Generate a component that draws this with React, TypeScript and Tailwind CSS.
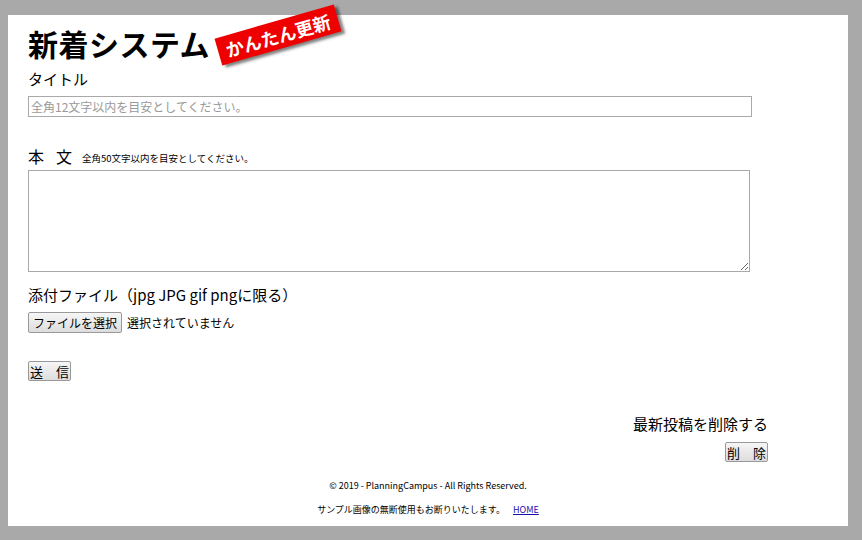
export default function App() {
  return (
    <div className="min-h-[540px] bg-[#a9a9a9] pt-[15px] pl-2 pr-[14px] pb-[14px] font-['Noto_Sans_CJK_JP',sans-serif] text-black">
      <div className="h-[511px] w-[840px] bg-white pl-5 pt-[5px]">
        <div className="relative flex h-[46px] items-center">
          <h1 className="text-[30px] font-bold leading-none tracking-[0.5px]">新着システム</h1>
          <span className="absolute left-[188px] top-[1px] -rotate-[16deg] bg-[#ee0000] px-[8px] py-[2px] text-[18px] font-bold leading-[24px] text-white shadow-[3px_3px_3px_rgba(0,0,0,0.5)]">
            かんたん更新
          </span>
        </div>
        <div className="mt-[3px] text-[15px] leading-[20px]">タイトル</div>
        <input
          type="text"
          placeholder="全角12文字以内を目安としてください。"
          className="mt-[7px] h-[21px] w-[724px] border border-[#a9a9a9] px-[2px] text-[12px] outline-none placeholder:text-[#999]"
        />
        <div className="mt-[31px] flex items-end leading-none">
          <span className="text-[16px]">本</span>
          <span className="ml-[12px] text-[16px]">文</span>
          <span className="ml-[10px] pb-[1px] text-[9.5px] whitespace-nowrap">全角50文字以内を目安としてください。</span>
        </div>
        <textarea className="mt-[6px] block h-[102px] w-[722px] border border-[#a9a9a9] outline-none" />
        <div className="mt-[13px] text-[15px] leading-[20px]">添付ファイル（jpg JPG gif pngに限る）</div>
        <div className="mt-[7px] flex items-center gap-[5px]">
          <button className="h-[21px] whitespace-nowrap rounded-[2px] border border-[#999] bg-gradient-to-b from-[#f6f6f6] to-[#dddddd] px-[4px] text-[12px] leading-none">
            ファイルを選択
          </button>
          <span className="text-[12px]">選択されていません</span>
        </div>
        <button className="mt-[28px] block h-[20px] w-[43px] whitespace-nowrap rounded-[2px] border border-[#999] bg-gradient-to-b from-[#f6f6f6] to-[#dddddd] text-[13px] leading-none">
          送　信
        </button>
        <div className="mt-[33px] w-[740px] text-right">
          <div className="text-[15px] leading-[20px]">最新投稿を削除する</div>
          <button className="mt-[8px] h-[20px] w-[43px] whitespace-nowrap rounded-[2px] border border-[#999] bg-gradient-to-b from-[#f6f6f6] to-[#dddddd] text-[13px] leading-none">
            削　除
          </button>
        </div>
        <div className="-ml-5 mt-[17px] text-center text-[9px] leading-[12px]">
          © 2019 - PlanningCampus - All Rights Reserved.
        </div>
        <div className="-ml-5 mt-[12px] text-center text-[9px] leading-[12px]">
          サンプル画像の無断使用もお断りいたします。 <a href="#" className="ml-[6px] text-[#1a0dab] underline">HOME</a>
        </div>
      </div>
    </div>
  );
}
